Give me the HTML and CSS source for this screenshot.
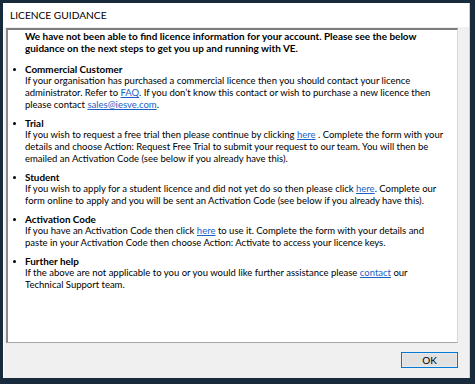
FILE: index.html
```html
<!DOCTYPE html>
<html>
<head>
<meta charset="utf-8">
<link rel="stylesheet" href="styles.css">
</head>
<body>
<div class="window">
  <div class="titlebar">LICENCE GUIDANCE</div>
  <div class="panel">
    <div class="content">
      <p class="intro">We have not been able to find licence information for your account. Please see the below<br>guidance on the next steps to get you up and running with VE.</p>
      <ul class="items">
        <li>
          <div class="head">Commercial Customer</div>
          <div class="text">If your organisation has purchased a commercial licence then you should contact your licence<br>administrator. Refer to <a href="#">FAQ</a>. If you don’t know this contact or wish to purchase a new licence then<br>please contact <a href="#">sales@iesve.com</a>.</div>
        </li>
        <li>
          <div class="head">Trial</div>
          <div class="text">If you wish to request a free trial then please continue by clicking <a href="#">here</a> . Complete the form with your<br>details and choose Action: Request Free Trial to submit your request to our team. You will then be<br>emailed an Activation Code (see below if you already have this).</div>
        </li>
        <li>
          <div class="head">Student</div>
          <div class="text">If you wish to apply for a student licence and did not yet do so then please click <a href="#">here</a>. Complete our<br>form online to apply and you will be sent an Activation Code (see below if you already have this).</div>
        </li>
        <li>
          <div class="head">Activation Code</div>
          <div class="text">If you have an Activation Code then click <a href="#">here</a> to use it. Complete the form with your details and<br>paste in your Activation Code then choose Action: Activate to access your licence keys.</div>
        </li>
        <li>
          <div class="head">Further help</div>
          <div class="text">If the above are not applicable to you or you would like further assistance please <a href="#">contact</a> our<br>Technical Support team.</div>
        </li>
      </ul>
    </div>
    <div class="footer">
      <button class="ok">OK</button>
    </div>
  </div>
</div>
</body>
</html>
```

FILE: styles.css
```css
html, body {
  margin: 0;
  padding: 0;
}
body {
  background: #172b3c;
  width: 475px;
  height: 384px;
  overflow: hidden;
  font-family: "Lato", "Liberation Sans", sans-serif;
  color: #000;
}
.window {
  margin: 3px 0 0 3px;
  width: 466px;
  height: 375px;
  background: #f0f0f0;
  border-right: 1px solid #cfcfcf;
  display: flex;
  flex-direction: column;
}
.titlebar {
  height: 24px;
  background: #fff;
  font-size: 10.2px;
  line-height: 24px;
  padding-left: 7px;
}
.panel {
  flex: 1;
  display: flex;
  flex-direction: column;
  padding: 1px 11px 0 2px;
  border-left: 1px solid #fff;
}
.content {
  height: 312px;
  background: #fff;
  border-top: 2px solid #7c7c7c;
  border-left: 2px solid #8a8a8a;
  border-right: 1px solid #d8d8d8;
  border-bottom: 1px solid #a8a8a8;
  padding: 0 0 0 17px;
  font-size: 9.5px;
  line-height: 12px;
  white-space: nowrap;
  overflow: hidden;
}
.intro {
  margin: 0 0 9px 0;
  font-weight: bold;
  font-size: 9.95px;
}
.items {
  list-style: none;
  margin: 0;
  padding: 0;
}
.items li {
  position: relative;
  margin-bottom: 6px;
}
.items li::before {
  content: "";
  position: absolute;
  left: -12px;
  top: 5px;
  width: 3px;
  height: 3px;
  border-radius: 50%;
  background: #000;
}
.head {
  font-weight: bold;
  font-size: 9.9px;
}
.text a {
  color: #1a5fc8;
  text-decoration: underline;
}
.footer {
  flex: 1;
  display: flex;
  justify-content: flex-end;
  align-items: flex-start;
  padding-top: 9px;
}
.ok {
  width: 57px;
  height: 16px;
  margin: 0;
  padding: 0;
  border: 1px solid #0078d7;
  background: #e1e1e1;
  box-shadow: inset 0 0 0 1px #e9e9e9;
  font-family: "Lato", "Liberation Sans", sans-serif;
  font-size: 10px;
  line-height: 14px;
  color: #000;
}
```
